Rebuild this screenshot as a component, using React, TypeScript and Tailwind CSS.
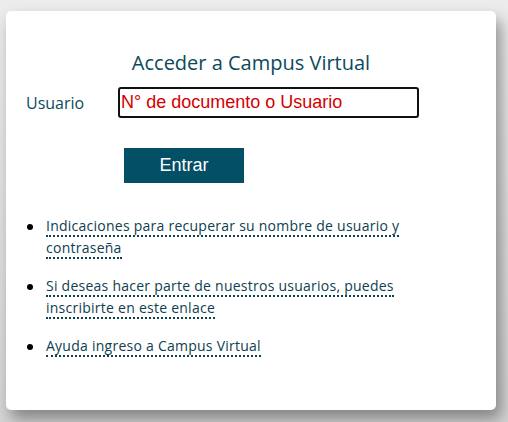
import React from 'react';

const links = [
  ['Indicaciones para recuperar su nombre de usuario y', 'contraseña'],
  ['Si deseas hacer parte de nuestros usuarios, puedes', 'inscribirte en este enlace'],
  ['Ayuda ingreso a Campus Virtual'],
];

export default function App() {
  return (
    <div className="min-h-[422px] w-[508px] bg-gradient-to-b from-[#ececec] to-[#d4d4d4] pt-[11px] pl-[6px]">
      <div className="w-[490px] h-[399px] bg-white rounded-[5px] shadow-[5px_9px_15px_rgba(0,0,0,0.38)] pt-[39px] px-[20px] font-['Open_Sans',sans-serif]">
        <h2 className="text-center text-[20px] leading-[26px] font-medium text-[#0b4a5c]">Acceder a Campus Virtual</h2>

        <div className="mt-[11px] flex items-center">
          <label className="w-[92px] text-[16px] text-[#0b4a5c]">Usuario</label>
          <input
            type="text"
            placeholder="N° de documento o Usuario"
            className="w-[301px] h-[31px] border-2 border-[#111] rounded-[3px] px-[1px] text-[18px] font-['Liberation_Sans',sans-serif] placeholder:text-[#d40000] outline-none"
          />
        </div>

        <button className="mt-[30px] ml-[98px] w-[120px] h-[35px] bg-[#034f66] text-white text-[18px] font-['Liberation_Sans',sans-serif]">
          Entrar
        </button>

        <ul className="mt-[32px] pl-[1px] space-y-[16px]">
          {links.map((lines, i) => (
            <li key={i} className="flex text-[14px] tracking-[0.25px] leading-[22px] text-[#0d4050]">
              <span className="w-[19px] shrink-0 flex pt-[9px]">
                <span className="w-[6px] h-[6px] rounded-full bg-black" />
              </span>
              <a href="#" className="block">
                {lines.map((l, j) => (
                  <span key={j} className="block">
                    <span className="border-b-2 border-dotted border-[#0d4050]">{l}</span>
                  </span>
                ))}
              </a>
            </li>
          ))}
        </ul>
      </div>
    </div>
  );
}
